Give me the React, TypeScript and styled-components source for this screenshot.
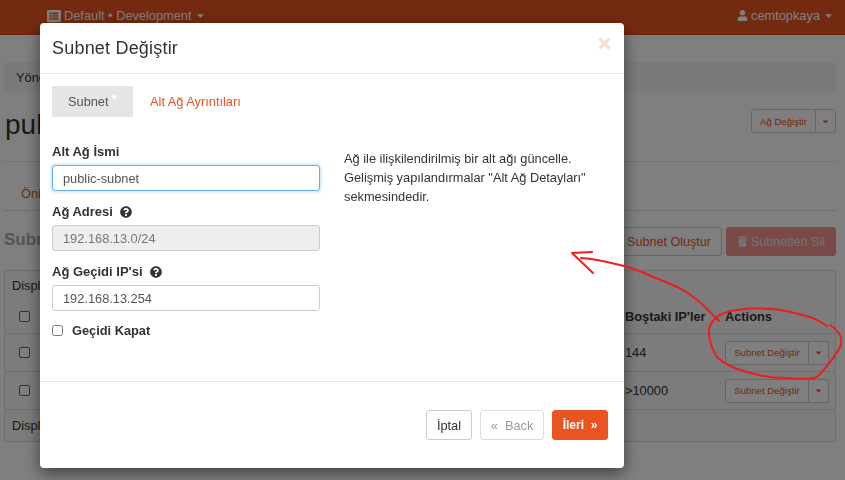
import styled, { createGlobalStyle } from 'styled-components';
import {
    FaCaretDown,
    FaListAlt,
    FaQuestionCircle,
    FaTimes,
    FaTrash,
    FaUser,
} from 'react-icons/fa';

const GlobalStyle = createGlobalStyle`
    html, body {
        margin: 0;
        padding: 0;
        height: 100%;
        background: #fff;
        overflow: hidden;
    }
    * {
        box-sizing: border-box;
    }
    body {
        font-family: "Liberation Sans", Arial, sans-serif;
        font-size: 12.8px;
        color: #333;
    }
`;

const subnets = [{ free: '144' }, { free: '>10000' }];

export default function App() {
    return (
        <>
            <GlobalStyle />
            <Page>
                <Navbar>
                    <NavItem>
                        <FaListAlt size={14} />
                        Default • Development
                        <FaCaretDown size={11} />
                    </NavItem>
                    <NavItem>
                        <FaUser size={11} />
                        cemtopkaya
                        <FaCaretDown size={11} />
                    </NavItem>
                </Navbar>
                <Content>
                    <Breadcrumb>Yönetici</Breadcrumb>
                    <TitleRow>
                        <Title>public</Title>
                        <SplitButton>
                            <SplitLabel>Ağ Değiştir</SplitLabel>
                            <SplitCaret>
                                <FaCaretDown size={9} />
                            </SplitCaret>
                        </SplitButton>
                    </TitleRow>
                    <PageTabs>
                        <PageTab>Önizleme</PageTab>
                    </PageTabs>
                    <SectionRow>
                        <SectionTitle>Subnets</SectionTitle>
                        <SectionActions>
                            <OutlineAction>Subnet Oluştur</OutlineAction>
                            <DangerAction>
                                <FaTrash size={11} />
                                Subnetleri Sil
                            </DangerAction>
                        </SectionActions>
                    </SectionRow>
                    <Table>
                        <InfoRow $top>Displaying 2 items</InfoRow>
                        <TableRow $header>
                            <CheckCell>
                                <BoxMark />
                            </CheckCell>
                            <FreeCell>Boştaki IP'ler</FreeCell>
                            <ActionCell>Actions</ActionCell>
                        </TableRow>
                        {subnets.map((subnet) => (
                            <TableRow key={subnet.free}>
                                <CheckCell>
                                    <BoxMark />
                                </CheckCell>
                                <FreeCell>{subnet.free}</FreeCell>
                                <ActionCell>
                                    <SplitButton>
                                        <RowLabel>Subnet Değiştir</RowLabel>
                                        <SplitCaret>
                                            <FaCaretDown size={9} />
                                        </SplitCaret>
                                    </SplitButton>
                                </ActionCell>
                            </TableRow>
                        ))}
                        <InfoRow>Displaying 2 items</InfoRow>
                    </Table>
                </Content>
            </Page>
            <Backdrop />
            <Modal>
                <ModalHeader>
                    <ModalTitle>Subnet Değiştir</ModalTitle>
                    <CloseIcon>
                        <FaTimes size={17} />
                    </CloseIcon>
                </ModalHeader>
                <ModalBody>
                    <WizardTabs>
                        <WizardTab $active>
                            Subnet<RequiredDot>*</RequiredDot>
                        </WizardTab>
                        <WizardTab>Alt Ağ Ayrıntıları</WizardTab>
                    </WizardTabs>
                    <Columns>
                        <FormColumn>
                            <Field>
                                <FieldLabel>Alt Ağ İsmi</FieldLabel>
                                <TextInput $focused defaultValue="public-subnet" />
                            </Field>
                            <Field>
                                <FieldLabel>
                                    Ağ Adresi
                                    <FaQuestionCircle size={12} />
                                </FieldLabel>
                                <TextInput disabled defaultValue="192.168.13.0/24" />
                            </Field>
                            <Field>
                                <FieldLabel>
                                    Ağ Geçidi IP'si
                                    <FaQuestionCircle size={12} />
                                </FieldLabel>
                                <TextInput defaultValue="192.168.13.254" />
                            </Field>
                            <CheckLabel>
                                <Checkbox type="checkbox" />
                                Geçidi Kapat
                            </CheckLabel>
                        </FormColumn>
                        <HelpText>
                            Ağ ile ilişkilendirilmiş bir alt ağı güncelle.
                            <br />
                            Gelişmiş yapılandırmalar "Alt Ağ Detayları"
                            <br />
                            sekmesindedir.
                        </HelpText>
                    </Columns>
                </ModalBody>
                <ModalFooter>
                    <FooterButton $width={46}>İptal</FooterButton>
                    <FooterButton $width={64} $muted>«&nbsp; Back</FooterButton>
                    <FooterButton $width={56} $primary>İleri&nbsp; »</FooterButton>
                </ModalFooter>
            </Modal>
            <Scribble viewBox="0 0 845 480" fill="none">
                <path d="M592 252 L572 253 L593 273" />
                <path d="M581 258 C595 259 608 262 620 265 C633 268 643 272 653 277 C664 281 674 285 683 290 C691 295 697 299 703 305 C709 311 714 316 719 321" />
                <path d="M827 326 C820 321 812 317 803 315 C793 312 783 310 773 309 C761 308 749 308 737 310 C729 311 722 313 717 317 C711 322 708 328 709 335 C710 344 713 351 717 357 C725 365 735 369 747 372 C760 376 774 378 787 378 C798 379 810 380 817 377 C823 371 831 362 837 352 C841 347 842 342 841 338 C839 332 835 328 830 325" />
            </Scribble>
        </>
    );
}

const Page = styled.div`
    width: 845px;
    height: 480px;
`;

const Navbar = styled.header`
    height: 35px;
    padding: 0 11px 0 47px;
    display: flex;
    align-items: flex-start;
    justify-content: space-between;
    background: #e95420;
    border-bottom: 1px solid #d84a18;
`;

const NavItem = styled.div`
    height: 31px;
    display: flex;
    align-items: center;
    gap: 3px;
    color: #fff;
`;

const Content = styled.main`
    padding: 27px 9px 0 4px;
`;

const Breadcrumb = styled.div`
    height: 31px;
    padding: 0 12px;
    display: flex;
    align-items: center;
    background: #f5f5f5;
    border-radius: 3px;
`;

const TitleRow = styled.div`
    height: 69px;
    padding-top: 16px;
    display: flex;
    align-items: flex-start;
    justify-content: space-between;
    border-bottom: 1px solid #e6e6e6;
`;

const Title = styled.h1`
    margin: 1px 0 0 1px;
    font-size: 28px;
    font-weight: 400;
    line-height: 30px;
`;

const SplitButton = styled.div`
    display: inline-flex;
    height: 24px;
    background: #fff;
    border: 1px solid #ccc;
    border-radius: 3px;
    color: #e95420;
`;

const SplitLabel = styled.span`
    width: 64px;
    display: flex;
    align-items: center;
    justify-content: center;
    font-size: 9.6px;
    border-right: 1px solid #ccc;
`;

const RowLabel = styled(SplitLabel)`
    width: 83px;
`;

const SplitCaret = styled.span`
    width: 19px;
    display: flex;
    align-items: center;
    justify-content: center;
`;

const PageTabs = styled.nav`
    height: 49px;
    padding: 24px 0 0 17px;
    border-bottom: 1px solid #ddd;
`;

const PageTab = styled.span`
    color: #e95420;
`;

const SectionRow = styled.div`
    height: 60px;
    padding-top: 16px;
    display: flex;
    align-items: flex-start;
    justify-content: space-between;
`;

const SectionTitle = styled.h2`
    margin: 0;
    padding-top: 3px;
    font-size: 17px;
    font-weight: 700;
    color: #aaa;
`;

const SectionActions = styled.div`
    display: flex;
    gap: 4px;
`;

const OutlineAction = styled.button`
    width: 110px;
    height: 29px;
    padding: 0 0 0 4px;
    font: 12.6px "Liberation Sans", Arial, sans-serif;
    color: #e95420;
    background: #fff;
    border: 1px solid #ccc;
    border-radius: 3px;
`;

const DangerAction = styled.button`
    width: 110px;
    height: 29px;
    padding: 0;
    display: flex;
    align-items: center;
    justify-content: center;
    gap: 3px;
    font: 12.6px "Liberation Sans", Arial, sans-serif;
    color: #e6e6e6;
    background: #f49490;
    border: 1px solid #f08c88;
    border-radius: 3px;
`;

const Table = styled.section`
    margin-top: -1px;
    background: #f9f9f9;
    border: 1px solid #ddd;
`;

const InfoRow = styled.div<{ $top?: boolean }>`
    height: 31px;
    padding: 0 7px ${(p) => (p.$top ? '2px' : '0')};
    display: flex;
    align-items: center;
`;

const TableRow = styled.div<{ $header?: boolean }>`
    height: ${(p) => (p.$header ? '32px' : '38px')};
    padding-bottom: ${(p) => (p.$header ? '2px' : '0')};
    display: flex;
    align-items: center;
    border-bottom: 1px solid #ddd;
    font-weight: ${(p) => (p.$header ? 700 : 400)};
`;

const CheckCell = styled.div`
    width: 620px;
    padding-left: 14px;
`;

const BoxMark = styled.span`
    display: block;
    width: 11px;
    height: 11px;
    background: #fff;
    border: 1px solid #666;
    border-radius: 2px;
`;

const FreeCell = styled.div`
    width: 100px;
    white-space: nowrap;
`;

const ActionCell = styled.div``;

const Backdrop = styled.div`
    position: fixed;
    inset: 0;
    background: rgba(0, 0, 0, 0.5);
`;

const Modal = styled.div`
    position: fixed;
    top: 23px;
    left: 40px;
    width: 584px;
    height: 445px;
    display: flex;
    flex-direction: column;
    background: #fff;
    border-radius: 4px;
    box-shadow: 0 5px 15px rgba(0, 0, 0, 0.5);
`;

const ModalHeader = styled.div`
    height: 51px;
    padding: 0 12px;
    display: flex;
    align-items: center;
    justify-content: space-between;
    border-bottom: 1px solid #e5e5e5;
`;

const ModalTitle = styled.h4`
    margin: 0;
    font-size: 18px;
    font-weight: 400;
    letter-spacing: 0.2px;
    color: #333;
`;

const CloseIcon = styled.span`
    display: flex;
    color: #fbdcd2;
    margin: -10px -1px 0 0;
`;

const ModalBody = styled.div`
    flex: 1;
    padding: 12px 12px 0;
    border-bottom: 1px solid #e5e5e5;
`;

const WizardTabs = styled.div`
    height: 31px;
    display: flex;
    gap: 17px;
`;

const WizardTab = styled.div<{ $active?: boolean }>`
    width: ${(p) => (p.$active ? '81px' : 'auto')};
    display: flex;
    align-items: center;
    justify-content: ${(p) => (p.$active ? 'center' : 'flex-start')};
    color: ${(p) => (p.$active ? '#555' : '#e95420')};
    background: ${(p) => (p.$active ? '#e4e5e6' : 'transparent')};
`;

const RequiredDot = styled.sup`
    color: #fff;
    font-size: 14px;
    font-weight: 700;
    line-height: 1;
    margin: -5px 0 0 3px;
`;

const Columns = styled.div`
    display: flex;
    gap: 24px;
    padding-top: 26px;
`;

const FormColumn = styled.div`
    width: 268px;
    display: flex;
    flex-direction: column;
    gap: 12px;
`;

const Field = styled.div`
    display: flex;
    flex-direction: column;
    gap: 6px;
`;

const FieldLabel = styled.label`
    height: 16px;
    display: flex;
    align-items: center;
    gap: 7px;
    font-size: 13px;
    font-weight: 700;
    color: #333;

    svg {
        margin-top: 1px;
    }
`;

const TextInput = styled.input<{ $focused?: boolean }>`
    width: 100%;
    height: 26px;
    padding: 0 10px;
    font: 12.8px "Liberation Sans", Arial, sans-serif;
    color: #555;
    background: #fff;
    border: 1px solid ${(p) => (p.$focused ? '#66afe9' : '#ccc')};
    border-radius: 3px;
    box-shadow: ${(p) => (p.$focused ? '0 0 4px rgba(102, 175, 233, 0.6)' : 'none')};
    outline: none;

    &:disabled {
        background: #eee;
        color: #777;
        opacity: 1;
    }
`;

const CheckLabel = styled.label`
    display: flex;
    align-items: center;
    gap: 9px;
    font-size: 12.8px;
    font-weight: 700;
`;

const Checkbox = styled.input`
    width: 11px;
    height: 11px;
    margin: 0;
`;

const HelpText = styled.p`
    margin: 0;
    padding-top: 6px;
    font-size: 12.8px;
    line-height: 19px;
    color: #333;
`;

const ModalFooter = styled.div`
    height: 86px;
    padding: 28px 16px 0;
    display: flex;
    justify-content: flex-end;
    align-items: flex-start;
    gap: 8px;
`;

const FooterButton = styled.button<{ $width: number; $muted?: boolean; $primary?: boolean }>`
    width: ${(p) => p.$width}px;
    height: 30px;
    padding: 0;
    font: ${(p) => (p.$primary ? '700 12px' : '400 12.8px')} "Liberation Sans", Arial, sans-serif;
    color: ${(p) => (p.$primary ? '#fff' : p.$muted ? '#999' : '#333')};
    background: ${(p) => (p.$primary ? '#e95420' : '#fff')};
    border: 1px solid ${(p) => (p.$primary ? '#e95420' : p.$muted ? '#ddd' : '#ccc')};
    border-radius: 3px;
`;

const Scribble = styled.svg`
    position: fixed;
    inset: 0;
    width: 845px;
    height: 480px;
    pointer-events: none;

    path {
        stroke: #ee1c1c;
        stroke-width: 2;
        stroke-linecap: round;
        stroke-linejoin: round;
    }
`;
